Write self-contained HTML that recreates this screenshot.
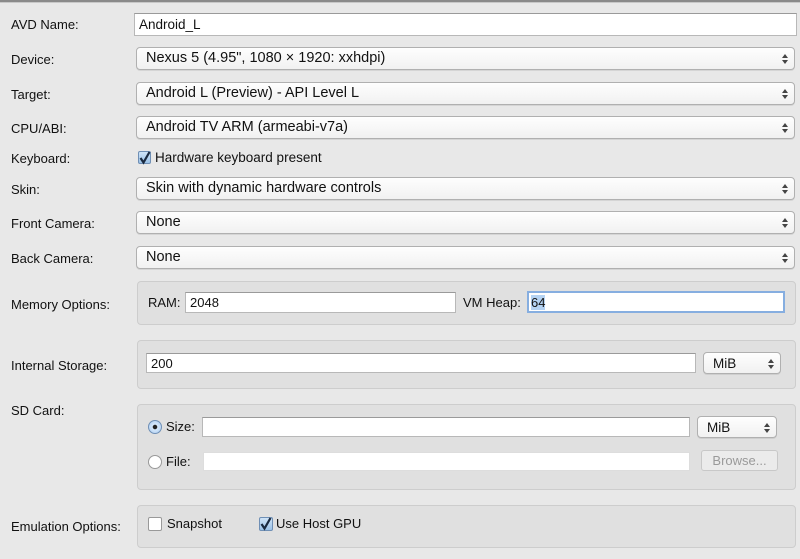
<!DOCTYPE html>
<html><head><style>
body{margin:0;width:800px;height:559px;background:#e8e8e8;font-family:"Liberation Sans",sans-serif;font-size:13px;color:#111;position:relative;overflow:hidden}
.a{position:absolute}
.lbl{position:absolute;left:11px;line-height:16px}
.in{position:absolute;background:#fff;border:1px solid #b8b8b8;border-top-color:#9a9a9a;box-sizing:border-box;padding:0 4px;line-height:20px;font-size:13px}
.sel{position:absolute;background:linear-gradient(#fefefe,#f1f1f1);border:1px solid #b0b0b0;border-radius:4px;box-sizing:border-box;padding-left:9px;line-height:21px;font-size:14.5px;box-shadow:0 1px 0 rgba(0,0,0,.08)}
.sel:after{content:"";position:absolute;right:6px;top:6px;width:0;height:0;border-left:3px solid transparent;border-right:3px solid transparent;border-bottom:4px solid #444}
.sel:before{content:"";position:absolute;right:6px;top:12px;width:0;height:0;border-left:3px solid transparent;border-right:3px solid transparent;border-top:4px solid #444}
.grp{position:absolute;left:137px;width:659px;background:#e0e0e0;border:1px solid #cdcdcd;border-radius:4px;box-sizing:border-box}
.cb{position:absolute;width:13px;height:13px;background:#fff;border:1px solid #999;border-radius:2px;box-sizing:border-box}
.cb.on{background:linear-gradient(#cfe3f7,#9cc2e8);border-color:#6f8fb5}
.rd{position:absolute;width:14px;height:14px;border-radius:50%;background:#fff;border:1px solid #999;box-sizing:border-box}
</style></head><body>
<div class="a" style="left:0;top:0;width:800px;height:2px;background:#8a8a8a"></div>
<div class="a" style="left:0;top:2px;width:800px;height:1px;background:#c8c8c8"></div>

<div class="lbl" style="top:17px">AVD Name:</div>
<div class="in" style="left:134px;top:13px;width:663px;height:23px;line-height:21px;font-size:13.5px">Android_L</div>

<div class="lbl" style="top:52px">Device:</div>
<div class="sel" style="left:136px;top:47px;width:659px;height:23px">Nexus 5 (4.95", 1080 × 1920: xxhdpi)</div>
<div class="lbl" style="top:87px">Target:</div>
<div class="sel" style="left:136px;top:82px;width:659px;height:23px">Android L (Preview) - API Level L</div>
<div class="lbl" style="top:121px">CPU/ABI:</div>
<div class="sel" style="left:136px;top:116px;width:659px;height:23px">Android TV ARM (armeabi-v7a)</div>

<div class="lbl" style="top:151px">Keyboard:</div>
<div class="cb on" style="left:138px;top:151px"></div>
<svg class="a" style="left:137px;top:148px" width="16" height="18"><path d="M3.5 10 L6.5 14.5 L12.5 4" fill="none" stroke="#1a2a40" stroke-width="2.2"/></svg>
<div class="a" style="left:155px;top:150px;font-size:13.5px">Hardware keyboard present</div>

<div class="lbl" style="top:182px">Skin:</div>
<div class="sel" style="left:136px;top:177px;width:659px;height:23px">Skin with dynamic hardware controls</div>
<div class="lbl" style="top:216px">Front Camera:</div>
<div class="sel" style="left:136px;top:211px;width:659px;height:23px">None</div>
<div class="lbl" style="top:251px">Back Camera:</div>
<div class="sel" style="left:136px;top:246px;width:659px;height:23px">None</div>

<div class="lbl" style="top:297px">Memory Options:</div>
<div class="grp" style="top:281px;height:44px"></div>
<div class="a" style="left:148px;top:295px">RAM:</div>
<div class="in" style="left:185px;top:292px;width:271px;height:21px">2048</div>
<div class="a" style="left:463px;top:295px">VM Heap:</div>
<div class="in" style="left:527px;top:291px;width:258px;height:22px;border:2px solid #86aee0;padding-left:2px;line-height:19px"><span style="background:#b5d3f3">64</span></div>

<div class="lbl" style="top:358px">Internal Storage:</div>
<div class="grp" style="top:340px;height:49px"></div>
<div class="in" style="left:146px;top:353px;width:550px;height:20px;line-height:19px">200</div>
<div class="sel" style="left:703px;top:352px;width:78px;height:22px;font-size:13.5px">MiB</div>

<div class="lbl" style="top:403px">SD Card:</div>
<div class="grp" style="top:404px;height:86px"></div>
<div class="rd" style="left:148px;top:420px;background:radial-gradient(#222 0 2px,#d6e8fb 2.5px,#a9cbf0);border-color:#6f8fb5"></div>
<div class="a" style="left:166px;top:419px">Size:</div>
<div class="in" style="left:202px;top:417px;width:488px;height:20px"></div>
<div class="sel" style="left:697px;top:416px;width:80px;height:22px;font-size:13.5px">MiB</div>
<div class="rd" style="left:148px;top:455px"></div>
<div class="a" style="left:166px;top:454px">File:</div>
<div class="in" style="left:203px;top:452px;width:487px;height:19px;border-color:#ddd"></div>
<div class="a" style="left:701px;top:450px;width:77px;height:21px;border:1px solid #c8c8c8;border-radius:3px;box-sizing:border-box;background:#ebebeb;color:#9a9a9a;text-align:center;line-height:19px">Browse...</div>

<div class="lbl" style="top:519px">Emulation Options:</div>
<div class="grp" style="top:505px;height:43px"></div>
<div class="cb" style="left:148px;top:517px;width:14px;height:14px"></div>
<div class="a" style="left:167px;top:516px">Snapshot</div>
<div class="cb on" style="left:259px;top:517px;width:14px;height:14px"></div>
<svg class="a" style="left:258px;top:514px" width="16" height="18"><path d="M3.5 10 L6.5 14.5 L12.5 4" fill="none" stroke="#1a2a40" stroke-width="2.2"/></svg>
<div class="a" style="left:276px;top:516px">Use Host GPU</div>
</body></html>
